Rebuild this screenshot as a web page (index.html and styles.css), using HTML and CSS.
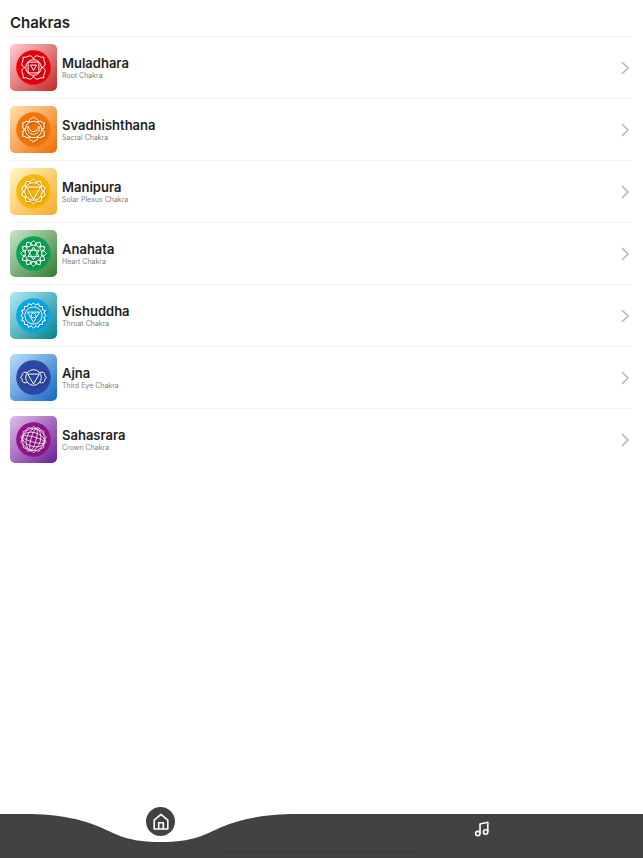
FILE: index.html
```html
<!DOCTYPE html>
<html lang="en">
<head>
<meta charset="utf-8">
<meta name="viewport" content="width=device-width, initial-scale=1">
<title>Chakras</title>
<link rel="stylesheet" href="styles.css">
</head>
<body>
<svg class="defs" aria-hidden="true">
  <defs>
    <path id="chevron" d="M2 2 8 8 2 14"/>
    <path id="root-petal" d="M0-8.3C.4-10.4 2-12 4.2-11.6 6-11.2 7-9.8 10.4-10.4 9.8-7 11.2-6 11.6-4.2 12-2 10.4-.4 8.3 0"/>
    <path id="sacral-petal" d="M-3.9-7.6C-5-9.8-3.2-10.8-1.8-11 -.8-11.3-.5-11.9 0-12.8 .5-11.9 .8-11.3 1.8-11 3.2-10.8 5-9.8 3.9-7.6"/>
    <path id="ten-petal" d="M-2.8-8.7C-4-10.8-1.2-11 0-12.4 1.2-11 4-10.8 2.8-8.7"/>
    <path id="heart-petal" d="M-3.3-8.2C-3.4-10.8-1.2-11.2 0-13 1.2-11.2 3.4-10.8 3.3-8.2"/>
    <path id="throat-petal" d="M-2.4-10.2C-2-11.4-.6-11.6 0-12.8 .6-11.6 2-11.4 2.4-10.2"/>
    <path id="crown-petal" d="M-2.6-11.2Q-1.5-12.2 0-13 1.5-12.2 2.6-11.2"/>
    <g id="crown-grid"><ellipse rx="2.6" ry="11.2"/><ellipse rx="7" ry="11.2"/></g>
  </defs>
</svg>

<main class="page">
  <h1 class="title">Chakras</h1>
  <ul class="list">
    <li><a class="row" href="#muladhara">
      <svg class="avatar red" viewBox="-23.5 -23.5 47 47" aria-hidden="true">
        <circle class="disc" r="17.3"/>
        <g class="lines">
          <use href="#root-petal"/><use href="#root-petal" transform="rotate(90)"/><use href="#root-petal" transform="rotate(180)"/><use href="#root-petal" transform="rotate(270)"/>
          <circle r="7.8"/><path d="M-5.4-5.4H5.4V5.4H-5.4ZM-3-2.4H3L0 3Z"/>
        </g>
      </svg>
      <span class="text"><span class="name">Muladhara</span><span class="sub">Root Chakra</span></span>
      <svg class="chevron" viewBox="0 0 10 16" aria-hidden="true"><use href="#chevron"/></svg>
    </a></li>
    <li><a class="row" href="#svadhishthana">
      <svg class="avatar orange" viewBox="-23.5 -23.5 47 47" aria-hidden="true">
        <circle class="disc" r="17.3"/>
        <g class="lines">
          <use href="#sacral-petal"/><use href="#sacral-petal" transform="rotate(60)"/><use href="#sacral-petal" transform="rotate(120)"/><use href="#sacral-petal" transform="rotate(180)"/><use href="#sacral-petal" transform="rotate(240)"/><use href="#sacral-petal" transform="rotate(300)"/>
          <circle r="8.2"/><path d="M-6.4-3C-6 7.4 6 7.4 6.4-3M-5-3.5C-4.5 4 4.5 4 5-3.5"/>
        </g>
      </svg>
      <span class="text"><span class="name">Svadhishthana</span><span class="sub">Sacral Chakra</span></span>
      <svg class="chevron" viewBox="0 0 10 16" aria-hidden="true"><use href="#chevron"/></svg>
    </a></li>
    <li><a class="row" href="#manipura">
      <svg class="avatar yellow" viewBox="-23.5 -23.5 47 47" aria-hidden="true">
        <circle class="disc" r="17.3"/>
        <g class="lines">
          <use href="#ten-petal"/><use href="#ten-petal" transform="rotate(36)"/><use href="#ten-petal" transform="rotate(72)"/><use href="#ten-petal" transform="rotate(108)"/><use href="#ten-petal" transform="rotate(144)"/><use href="#ten-petal" transform="rotate(180)"/><use href="#ten-petal" transform="rotate(216)"/><use href="#ten-petal" transform="rotate(252)"/><use href="#ten-petal" transform="rotate(288)"/><use href="#ten-petal" transform="rotate(324)"/>
          <circle r="8.8"/><path d="M-7-4.4H7L0 8Z"/>
        </g>
      </svg>
      <span class="text"><span class="name">Manipura</span><span class="sub">Solar Plexus Chakra</span></span>
      <svg class="chevron" viewBox="0 0 10 16" aria-hidden="true"><use href="#chevron"/></svg>
    </a></li>
    <li><a class="row" href="#anahata">
      <svg class="avatar green" viewBox="-23.5 -23.5 47 47" aria-hidden="true">
        <circle class="disc" r="17.3"/>
        <g class="lines">
          <use href="#heart-petal"/><use href="#heart-petal" transform="rotate(30)"/><use href="#heart-petal" transform="rotate(60)"/><use href="#heart-petal" transform="rotate(90)"/><use href="#heart-petal" transform="rotate(120)"/><use href="#heart-petal" transform="rotate(150)"/><use href="#heart-petal" transform="rotate(180)"/><use href="#heart-petal" transform="rotate(210)"/><use href="#heart-petal" transform="rotate(240)"/><use href="#heart-petal" transform="rotate(270)"/><use href="#heart-petal" transform="rotate(300)"/><use href="#heart-petal" transform="rotate(330)"/>
          <circle r="8.3"/><path d="M-5.6-3.2H5.6L0 6.5ZM-5.6 3.2H5.6L0-6.5Z"/>
        </g>
      </svg>
      <span class="text"><span class="name">Anahata</span><span class="sub">Heart Chakra</span></span>
      <svg class="chevron" viewBox="0 0 10 16" aria-hidden="true"><use href="#chevron"/></svg>
    </a></li>
    <li><a class="row" href="#vishuddha">
      <svg class="avatar cyan" viewBox="-23.5 -23.5 47 47" aria-hidden="true">
        <circle class="disc" r="17.3"/>
        <g class="lines">
          <use href="#throat-petal"/><use href="#throat-petal" transform="rotate(22.5)"/><use href="#throat-petal" transform="rotate(45)"/><use href="#throat-petal" transform="rotate(67.5)"/><use href="#throat-petal" transform="rotate(90)"/><use href="#throat-petal" transform="rotate(112.5)"/><use href="#throat-petal" transform="rotate(135)"/><use href="#throat-petal" transform="rotate(157.5)"/><use href="#throat-petal" transform="rotate(180)"/><use href="#throat-petal" transform="rotate(202.5)"/><use href="#throat-petal" transform="rotate(225)"/><use href="#throat-petal" transform="rotate(247.5)"/><use href="#throat-petal" transform="rotate(270)"/><use href="#throat-petal" transform="rotate(292.5)"/><use href="#throat-petal" transform="rotate(315)"/><use href="#throat-petal" transform="rotate(337.5)"/>
          <circle r="8.6"/><path d="M-6-3.4H6L0 6.8Z"/><circle r="2.4"/>
        </g>
      </svg>
      <span class="text"><span class="name">Vishuddha</span><span class="sub">Throat Chakra</span></span>
      <svg class="chevron" viewBox="0 0 10 16" aria-hidden="true"><use href="#chevron"/></svg>
    </a></li>
    <li><a class="row" href="#ajna">
      <svg class="avatar blue" viewBox="-23.5 -23.5 47 47" aria-hidden="true">
        <circle class="disc" r="17.3"/>
        <g class="lines">
          <circle r="7.8"/><path d="M-5.8-3.4H5.8L0 6.4ZM-6-5C-9-6-11.5-4.8-11.3-2.6-11.2-1.2-12-.7-13.2 0-12 .7-11.2 1.2-11.3 2.6-11.5 4.8-9 6-6 5M6-5C9-6 11.5-4.8 11.3-2.6 11.2-1.2 12-.7 13.2 0 12 .7 11.2 1.2 11.3 2.6 11.5 4.8 9 6 6 5"/>
        </g>
      </svg>
      <span class="text"><span class="name">Ajna</span><span class="sub">Third Eye Chakra</span></span>
      <svg class="chevron" viewBox="0 0 10 16" aria-hidden="true"><use href="#chevron"/></svg>
    </a></li>
    <li><a class="row" href="#sahasrara">
      <svg class="avatar purple" viewBox="-23.5 -23.5 47 47" aria-hidden="true">
        <circle class="disc" r="17.3"/>
        <g class="lines fine">
          <use href="#crown-petal"/><use href="#crown-petal" transform="rotate(25.7)"/><use href="#crown-petal" transform="rotate(51.4)"/><use href="#crown-petal" transform="rotate(77.1)"/><use href="#crown-petal" transform="rotate(102.9)"/><use href="#crown-petal" transform="rotate(128.6)"/><use href="#crown-petal" transform="rotate(154.3)"/><use href="#crown-petal" transform="rotate(180)"/><use href="#crown-petal" transform="rotate(205.7)"/><use href="#crown-petal" transform="rotate(231.4)"/><use href="#crown-petal" transform="rotate(257.1)"/><use href="#crown-petal" transform="rotate(282.9)"/><use href="#crown-petal" transform="rotate(308.6)"/><use href="#crown-petal" transform="rotate(334.3)"/>
          <circle r="11.2"/><use href="#crown-grid" transform="rotate(15)"/><use href="#crown-grid" transform="rotate(105)"/>
        </g>
      </svg>
      <span class="text"><span class="name">Sahasrara</span><span class="sub">Crown Chakra</span></span>
      <svg class="chevron" viewBox="0 0 10 16" aria-hidden="true"><use href="#chevron"/></svg>
    </a></li>
  </ul>
</main>

<nav class="tabs" aria-label="Main">
  <svg class="wave" viewBox="0 0 644 44" preserveAspectRatio="none" aria-hidden="true"><path d="M0 0H25C60 0 84 6 100 13 118 21 128 28 161 28S204 21 222 13C238 6 262 0 297 0H644V44H0Z"/></svg>
  <a class="tab active" href="#home" aria-label="Home" aria-current="page">
    <span class="bubble"><svg class="icon" viewBox="0 0 18 18" aria-hidden="true"><path d="M2.2 7.2 9 1.4 15.8 7.2V16H2.2ZM6.7 16V9.8H11.3V16"/></svg></span>
  </a>
  <a class="tab music" href="#music" aria-label="Music">
    <svg class="icon" viewBox="0 0 18 18" aria-hidden="true"><path d="M7 13.5V4L14.8 2.2V12"/><circle cx="4.8" cy="13.6" r="2.2"/><circle cx="12.6" cy="12" r="2.2"/></svg>
  </a>
  <span class="indicator"></span>
</nav>
</body>
</html>
```

FILE: styles.css
```css
* { box-sizing: border-box; }

body {
  margin: 0;
  min-height: 100vh;
  display: flex;
  flex-direction: column;
  background: #fff;
  color: #1f1f1f;
  font-family: Inter, "Liberation Sans", sans-serif;
}

.defs { position: absolute; width: 0; height: 0; }

.page { flex: 1; padding: 9px 11px 0 10px; }

.title {
  margin: 0;
  font-size: 15px;
  line-height: 27px;
  font-weight: 600;
}

.list { margin: 0; padding: 0; list-style: none; }
.list li { border-top: 1px solid #f2f2f2; }

.row {
  display: flex;
  align-items: center;
  gap: 5px;
  padding: 7px 0;
  color: inherit;
  text-decoration: none;
}

.avatar { width: 47px; height: 47px; border-radius: 5px; flex: none; }
.text { flex: 1; display: flex; flex-direction: column; }
.name { font-size: 13px; line-height: 15px; font-weight: 600; }
.sub { font-size: 7px; line-height: 9px; color: #808080; }

.chevron {
  width: 10px;
  height: 16px;
  margin-right: 2px;
  fill: none;
  stroke: #b8b8b8;
  stroke-width: 1.6;
}

.lines {
  fill: none;
  stroke: #fff;
  stroke-width: 1;
  stroke-linejoin: round;
  filter: drop-shadow(1px 1px 1px rgba(0, 0, 0, .3));
}
.fine { stroke-width: .7; }

.red { background: linear-gradient(135deg, #ffcdd2, #c62828); }
.red .disc { fill: #e9000b; }
.orange { background: linear-gradient(135deg, #ffe0b2, #ef6c00); }
.orange .disc { fill: #f27405; }
.yellow { background: linear-gradient(135deg, #fff9c4, #f9a825); }
.yellow .disc { fill: #fbb509; }
.green { background: linear-gradient(135deg, #c8e6c9, #2e7d32); }
.green .disc { fill: #08a351; }
.cyan { background: linear-gradient(135deg, #b2ebf2, #00838f); }
.cyan .disc { fill: #08a8e8; }
.blue { background: linear-gradient(135deg, #bbdefb, #1565c0); }
.blue .disc { fill: #2b46a3; }
.purple { background: linear-gradient(135deg, #e1bee7, #6a1b9a); }
.purple .disc { fill: #95118a; }

.tabs { position: relative; display: flex; height: 44px; }
.tab { position: relative; flex: 1; display: flex; justify-content: center; }
.music { padding-top: 6px; }
.wave { position: absolute; inset: 0; width: 100%; height: 100%; fill: #424242; }

.bubble {
  position: absolute;
  top: -7px;
  display: flex;
  align-items: center;
  justify-content: center;
  width: 29px;
  height: 29px;
  border-radius: 50%;
  background: #424242;
}

.icon {
  width: 18px;
  height: 18px;
  fill: none;
  stroke: #fff;
  stroke-width: 1.6;
  stroke-linejoin: round;
}

.indicator {
  position: absolute;
  left: 35%;
  right: 35%;
  bottom: 4px;
  height: 3px;
  border-radius: 2px;
  background: #3e3e3e;
}
```
